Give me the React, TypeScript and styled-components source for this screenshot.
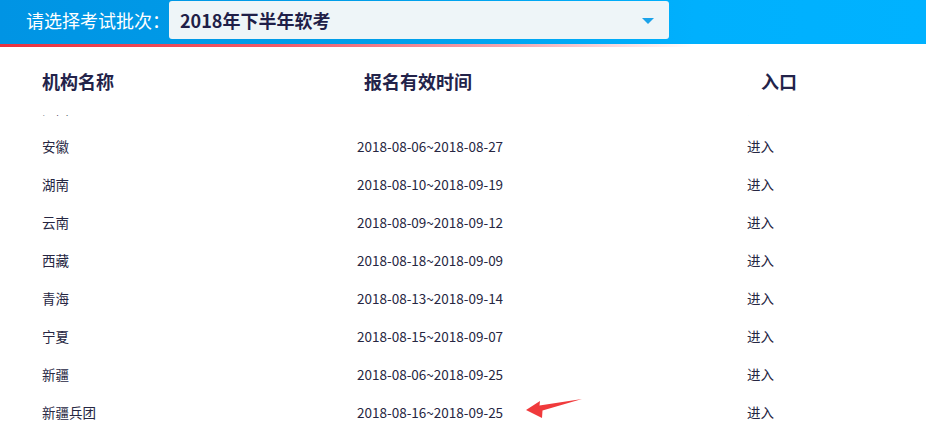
import React from 'react'
import styled, { createGlobalStyle } from 'styled-components'

const GlobalStyle = createGlobalStyle`
  html, body {
    margin: 0;
    padding: 0;
    background: #ffffff;
    overflow: hidden;
  }
  body {
    font-family: "Noto Sans CJK SC", "Noto Sans", "Liberation Sans", sans-serif;
  }
`

const rows = [
  { name: '江西', date: '2018-08-08~2018-08-28' },
  { name: '安徽', date: '2018-08-06~2018-08-27' },
  { name: '湖南', date: '2018-08-10~2018-09-19' },
  { name: '云南', date: '2018-08-09~2018-09-12' },
  { name: '西藏', date: '2018-08-18~2018-09-09' },
  { name: '青海', date: '2018-08-13~2018-09-14' },
  { name: '宁夏', date: '2018-08-15~2018-09-07' },
  { name: '新疆', date: '2018-08-06~2018-09-25' },
  { name: '新疆兵团', date: '2018-08-16~2018-09-25', marked: true },
  { name: '上海', date: '2018-08-06~2018-09-20' },
]

const App: React.FC = () => {
  return (
    <Page>
      <GlobalStyle />
      <TopBar>
        <Label>请选择考试批次：</Label>
        <Select>
          <SelectText>2018年下半年软考</SelectText>
          <Caret />
        </Select>
      </TopBar>
      <RedLine />
      <HeadRow>
        <HeadCell>机构名称</HeadCell>
        <HeadCell className="indent-1">报名有效时间</HeadCell>
        <HeadCell className="indent-2">入口</HeadCell>
      </HeadRow>
      <ListView>
        <ListInner>
          {rows.map((r) => (
            <Row key={r.name}>
              <Cell>{r.name}</Cell>
              <Cell>
                {r.date}
                {r.marked && (
                  <Arrow viewBox="0 0 60 22" width="60" height="22">
                    <path d="M2 12 L16 3 L15.5 7.5 L58 1 L18.5 12.5 L18 20 Z" fill="#f03a3c" />
                  </Arrow>
                )}
              </Cell>
              <Cell>进入</Cell>
            </Row>
          ))}
        </ListInner>
      </ListView>
    </Page>
  )
}

const Page = styled.div`
  width: 926px;
  height: 430px;
  overflow: hidden;
`

const TopBar = styled.div`
  height: 44px;
  display: flex;
  align-items: flex-start;
  padding-top: 1px;
  box-sizing: border-box;
  background: linear-gradient(90deg, #0094e4 0%, #009ee9 40%, #00b0fd 75%, #00b2ff 100%);
`

const Label = styled.div`
  width: 169px;
  padding-left: 26px;
  box-sizing: border-box;
  line-height: 38px;
  font-size: 18px;
  color: #ffffff;
  white-space: nowrap;
`

const Select = styled.div`
  width: 500px;
  height: 38px;
  background: #eef5f8;
  border-radius: 3px;
  display: flex;
  align-items: center;
  justify-content: space-between;
  padding: 0 15px 0 11px;
  box-sizing: border-box;
`

const SelectText = styled.div`
  font-size: 18px;
  font-weight: 700;
  color: #1f1f48;
`

const Caret = styled.div`
  width: 0;
  height: 0;
  border-left: 6px solid transparent;
  border-right: 6px solid transparent;
  border-top: 6px solid #1aa3ea;
  margin-top: 2px;
`

const RedLine = styled.div`
  height: 3px;
  background: linear-gradient(90deg, #e8323f 0%, #f05a68 30%, #f3a6ae 55%, rgba(255, 255, 255, 0) 75%);
`

const grid = `
  display: grid;
  grid-template-columns: 315px 390px 1fr;
  padding-left: 42px;
`

const HeadRow = styled.div`
  ${grid};
  height: 68px;
  align-items: center;
  padding-bottom: 1px;
  box-sizing: border-box;
`

const HeadCell = styled.div`
  font-size: 18px;
  font-weight: 700;
  color: #23234a;
  &.indent-1 {
    padding-left: 7px;
  }
  &.indent-2 {
    padding-left: 14px;
  }
`

const ListView = styled.div`
  height: 315px;
  overflow: hidden;
`

const ListInner = styled.div`
  margin-top: -26px;
`

const Row = styled.div`
  ${grid};
  height: 38px;
  align-items: center;
`

const Cell = styled.div`
  position: relative;
  font-size: 13.5px;
  color: #262642;
  white-space: nowrap;
`

const Arrow = styled.svg`
  position: absolute;
  left: 167px;
  top: -4px;
`

export default App
